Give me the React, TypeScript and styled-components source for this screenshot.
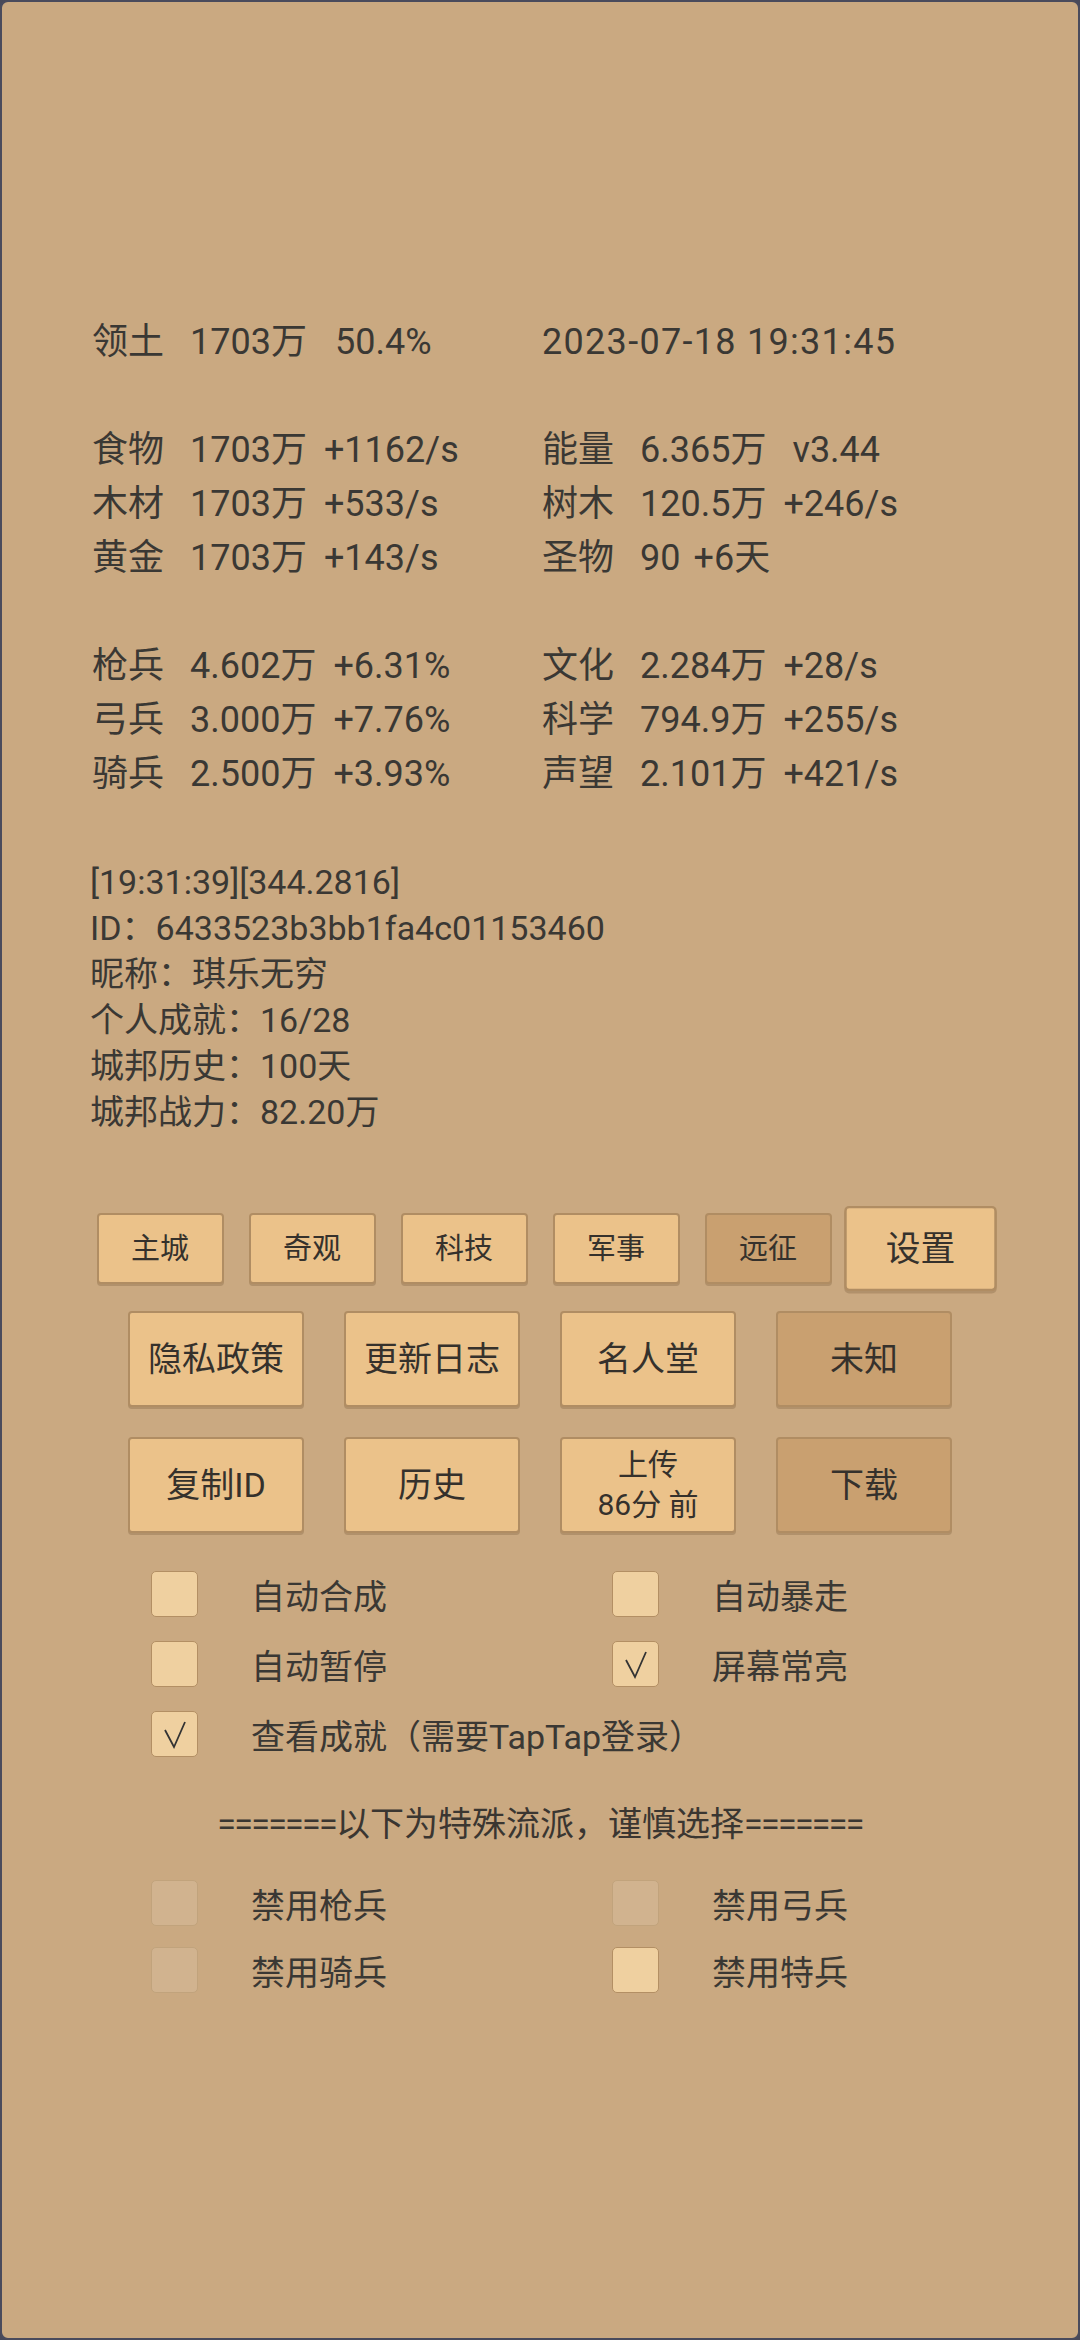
import styled, { createGlobalStyle } from "styled-components";

const GlobalStyle = createGlobalStyle`
  html, body {
    margin: 0;
    padding: 0;
    background: #484959;
  }
  * {
    box-sizing: border-box;
  }
`;

const FONT = `Roboto, "Noto Sans CJK SC", sans-serif`;

const Screen = styled.div`
  width: 1080px;
  min-height: 2340px;
  border: 2px solid #4a4b5c;
  border-radius: 8px;
  background: #caa981;
  color: #3a3834;
  font-family: ${FONT};
  padding-top: 313px;
`;

const StatGrid = styled.div`
  display: grid;
  grid-template-columns: 450px 1fr;
  padding-left: 90px;
  font-size: 36px;
  line-height: 54px;
`;

const StatCell = styled.div`
  display: flex;
  white-space: nowrap;
`;

const StatLabel = styled.span`
  width: 98px;
  flex: none;
`;

const Part = styled.span<{ $gap: number }>`
  margin-left: ${(p) => p.$gap}px;
`;

const DateText = styled.span`
  letter-spacing: 1.3px;
  white-space: pre;
`;

const BlankLine = styled.div`
  grid-column: 1 / -1;
  height: 54px;
`;

const Info = styled.div`
  margin-top: 58px;
  padding-left: 88px;
  font-size: 34px;
  line-height: 46px;
`;

const ButtonRow = styled.div<{ $top: number; $gap: number }>`
  display: flex;
  justify-content: center;
  align-items: center;
  gap: ${(p) => p.$gap}px;
  margin-top: ${(p) => p.$top}px;
`;

const GameButton = styled.button<{ $big?: boolean; $dim?: boolean; $active?: boolean }>`
  width: ${(p) => (p.$big ? 176 : 127)}px;
  height: ${(p) => (p.$big ? 96 : 71)}px;
  padding: 0;
  border: 2px solid #b08d63;
  border-radius: 4px;
  background: ${(p) => (p.$dim ? "#c9a070" : "#ebc28a")};
  box-shadow: 0 2px 0 rgba(120, 90, 55, 0.3);
  color: #35312c;
  font-family: ${FONT};
  font-size: ${(p) => (p.$big ? 34 : 29)}px;
  line-height: 40px;
  display: flex;
  flex-direction: column;
  align-items: center;
  justify-content: center;
  transform: ${(p) => (p.$active ? "scale(1.2)" : "none")};
`;

const SmallLine = styled.span`
  font-size: 30px;
  line-height: 40px;
`;

const CheckGrid = styled.div<{ $top: number; $gap: number }>`
  display: grid;
  grid-template-columns: 461px 1fr;
  row-gap: ${(p) => p.$gap}px;
  padding-left: 149px;
  margin-top: ${(p) => p.$top}px;
`;

const CheckItem = styled.label<{ $wide?: boolean }>`
  display: flex;
  align-items: center;
  gap: 53px;
  height: 46px;
  font-size: 34px;
  grid-column: ${(p) => (p.$wide ? "1 / -1" : "auto")};
  white-space: nowrap;
`;

const Box = styled.span<{ $disabled?: boolean }>`
  width: 47px;
  height: 46px;
  flex: none;
  border-radius: 5px;
  border: 1.5px solid ${(p) => (p.$disabled ? "#c1a37c" : "#b38f64")};
  background: ${(p) => (p.$disabled ? "#d1b38f" : "#efd0a0")};
  display: flex;
  align-items: center;
  justify-content: center;
`;

const Separator = styled.div`
  margin-top: 44px;
  text-align: center;
  font-size: 34px;
  line-height: 46px;
  color: #3a3631;
`;

const Equals = styled.span`
  letter-spacing: -1.7px;
`;

const Check = () => (
  <svg width="24" height="32" viewBox="0 0 24 32">
    <path d="M2 12 L11 29 L22 4" fill="none" stroke="#333333" strokeWidth="1.8" />
  </svg>
);

const Option = ({
  label,
  checked,
  disabled,
  wide,
}: {
  label: string;
  checked?: boolean;
  disabled?: boolean;
  wide?: boolean;
}) => (
  <CheckItem $wide={wide}>
    <Box $disabled={disabled}>{checked && <Check />}</Box>
    <span>{label}</span>
  </CheckItem>
);

// label, main value, extra value, gap before extra
type Stat = [string, string, string, number?];

const statRows: (Stat[] | null)[] = [
  [["领土", "1703万", "50.4%", 28]],
  null,
  [
    ["食物", "1703万", "+1162/s"],
    ["能量", "6.365万", "v3.44", 26],
  ],
  [
    ["木材", "1703万", "+533/s"],
    ["树木", "120.5万", "+246/s"],
  ],
  [
    ["黄金", "1703万", "+143/s"],
    ["圣物", "90", "+6天", 13],
  ],
  null,
  [
    ["枪兵", "4.602万", "+6.31%"],
    ["文化", "2.284万", "+28/s"],
  ],
  [
    ["弓兵", "3.000万", "+7.76%"],
    ["科学", "794.9万", "+255/s"],
  ],
  [
    ["骑兵", "2.500万", "+3.93%"],
    ["声望", "2.101万", "+421/s"],
  ],
];

const tabs = ["主城", "奇观", "科技", "军事", "远征", "设置"];

export default function App() {
  return (
    <>
      <GlobalStyle />
      <Screen>
        <StatGrid>
          {statRows.map((row, i) => {
            if (!row) return <BlankLine key={i} />;
            const cells = row.map(([label, main, extra, gap], j) => (
              <StatCell key={`${i}-${j}`}>
                <StatLabel>{label}</StatLabel>
                <span>{main}</span>
                <Part $gap={gap ?? 17}>{extra}</Part>
              </StatCell>
            ));
            if (i === 0) {
              cells.push(
                <StatCell key="date">
                  <DateText>2023-07-18 19:31:45</DateText>
                </StatCell>
              );
            }
            return cells;
          })}
        </StatGrid>

        <Info>
          <div>[19:31:39][344.2816]</div>
          <div>ID：6433523b3bb1fa4c01153460</div>
          <div>昵称：琪乐无穷</div>
          <div>个人成就：16/28</div>
          <div>城邦历史：100天</div>
          <div>城邦战力：82.20万</div>
        </Info>

        <ButtonRow $top={78} $gap={25}>
          {tabs.map((t) => (
            <GameButton key={t} $dim={t === "远征"} $active={t === "设置"}>
              {t}
            </GameButton>
          ))}
        </ButtonRow>

        <ButtonRow $top={27} $gap={40}>
          <GameButton $big>隐私政策</GameButton>
          <GameButton $big>更新日志</GameButton>
          <GameButton $big>名人堂</GameButton>
          <GameButton $big $dim>
            未知
          </GameButton>
        </ButtonRow>

        <ButtonRow $top={30} $gap={40}>
          <GameButton $big>复制ID</GameButton>
          <GameButton $big>历史</GameButton>
          <GameButton $big>
            <SmallLine>上传</SmallLine>
            <SmallLine>86分 前</SmallLine>
          </GameButton>
          <GameButton $big $dim>
            下载
          </GameButton>
        </ButtonRow>

        <CheckGrid $top={38} $gap={24}>
          <Option label="自动合成" />
          <Option label="自动暴走" />
          <Option label="自动暂停" />
          <Option label="屏幕常亮" checked />
          <Option label="查看成就（需要TapTap登录）" checked wide />
        </CheckGrid>

        <Separator>
          <Equals>=======</Equals>以下为特殊流派，谨慎选择<Equals>=======</Equals>
        </Separator>

        <CheckGrid $top={33} $gap={21}>
          <Option label="禁用枪兵" disabled />
          <Option label="禁用弓兵" disabled />
          <Option label="禁用骑兵" disabled />
          <Option label="禁用特兵" />
        </CheckGrid>
      </Screen>
    </>
  );
}
